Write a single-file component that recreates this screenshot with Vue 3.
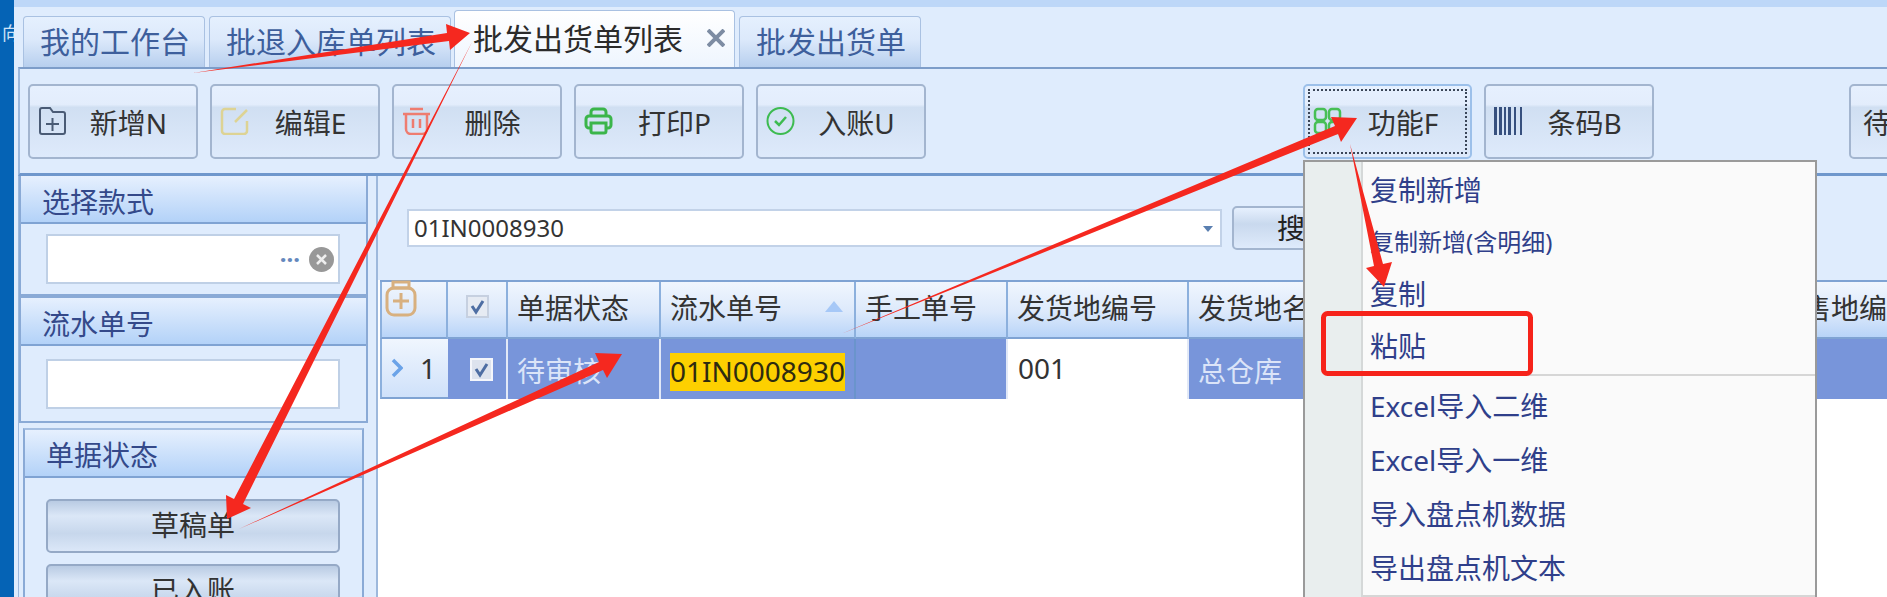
<template>
  <div class="app">
    <div class="strip"><span class="strip-text">向</span></div>

    <div class="main">
      <div class="tabs">
        <div v-for="tab in tabs" :key="tab.name" class="tab" :class="{ active: tab.active }" :style="{ width: tab.width + 'px' }">
          {{ tab.name }}
          <svg v-if="tab.active" class="tab-close" width="18" height="18" viewBox="0 0 18 18">
            <path d="M1 1l16 16M17 1L1 17" stroke="#7d8ca3" stroke-width="4" fill="none" />
          </svg>
        </div>
      </div>

      <div class="toolbar">
        <button v-for="btn in buttons" :key="btn.text" class="tool-btn" :class="btn.cls">
          <svg v-if="btn.icon === 'add'" class="tool-icon" viewBox="0 0 29 28" fill="none" stroke="#4a5b75" stroke-width="2">
            <path d="M9 27H4a2 2 0 0 1-2-2V3a2 2 0 0 1 2-2h8l3 4h10a2 2 0 0 1 2 2v16M27 23v2a2 2 0 0 1-2 2H9" />
            <path d="M8 17h13M14.500 11v13" />
          </svg>
          <svg v-else-if="btn.icon === 'edit'" class="tool-icon" viewBox="0 0 29 28" fill="none" stroke="#ddd394" stroke-width="2.500">
            <path d="M16 2H5a3 3 0 0 0-3 3v19a3 3 0 0 0 3 3h19a3 3 0 0 0 3-3V14" />
            <path d="M15 15L27 3" />
          </svg>
          <svg v-else-if="btn.icon === 'del'" class="tool-icon" viewBox="0 0 29 28" fill="none" stroke="#ee7c70" stroke-width="2.500">
            <path d="M8 2h13M1 7h27M4 7v15a5 5 0 0 0 5 5h11a5 5 0 0 0 5-5V7M11 12v9M18 12v9" />
          </svg>
          <svg v-else-if="btn.icon === 'print'" class="tool-icon" viewBox="0 0 29 28" fill="none" stroke="#3bb54a" stroke-width="3">
            <path d="M7 9V5a3 3 0 0 1 3-3h9a3 3 0 0 1 3 3v4" />
            <path d="M6 21H5a3 3 0 0 1-3-3v-6a3 3 0 0 1 3-3h19a3 3 0 0 1 3 3v6a3 3 0 0 1-3 3h-1" />
            <path d="M7 16h15v8a2 2 0 0 1-2 2H9a2 2 0 0 1-2-2z" />
          </svg>
          <svg v-else-if="btn.icon === 'check'" class="tool-icon" viewBox="0 0 29 28" fill="none" stroke="#3dbb50" stroke-width="2">
            <circle cx="14.500" cy="14" r="13" />
            <path d="M9 14l4 4 7-8" stroke-width="2.500" />
          </svg>
          <svg v-else-if="btn.icon === 'func'" class="tool-icon" viewBox="0 0 29 28" fill="none" stroke="#47bf55" stroke-width="2.500">
            <rect x="2" y="2" width="11" height="11" rx="3" />
            <rect x="16" y="2" width="11" height="11" rx="3" />
            <rect x="2" y="15" width="11" height="11" rx="3" />
            <rect x="16" y="15" width="11" height="11" rx="3" />
          </svg>
          <svg v-else-if="btn.icon === 'code'" class="tool-icon" viewBox="0 0 29 28" fill="#37507e">
            <rect x="0" y="0" width="3" height="28" />
            <rect x="5" y="0" width="3" height="28" />
            <rect x="10" y="0" width="2" height="28" />
            <rect x="14" y="0" width="3" height="28" />
            <rect x="20" y="0" width="2" height="28" />
            <rect x="26" y="0" width="2" height="28" />
          </svg>
          <span class="tool-label">{{ btn.text }}</span>
        </button>
      </div>

      <div class="body">
        <div class="side">
          <div class="pane pane-one">
            <div class="pane-title">选择款式</div>
            <div class="pane-body">
              <div class="side-input">
                <span class="dots">···</span>
                <svg class="clear" width="25" height="25" viewBox="0 0 25 25">
                  <circle cx="12.500" cy="12.500" r="12.500" fill="#989898" />
                  <path d="M8 8l9 9M17 8l-9 9" stroke="#eee" stroke-width="2.500" />
                </svg>
              </div>
            </div>
          </div>
          <div class="pane pane-two">
            <div class="pane-title">流水单号</div>
            <div class="pane-body">
              <div class="side-input"></div>
            </div>
          </div>
          <div class="pane pane-three">
            <div class="pane-title">单据状态</div>
            <div class="pane-body status-body">
              <div class="status-btn">草稿单</div>
              <div class="status-btn">已入账</div>
            </div>
          </div>
        </div>

        <div class="content">
          <div class="search-row">
            <div class="combo">
              01IN0008930
              <span class="combo-arrow"></span>
            </div>
            <div class="search-btn">搜索</div>
          </div>

          <div class="table">
            <div class="th th-plus">
              <svg class="plus-icon" width="32" height="38" viewBox="0 0 32 38" fill="none" stroke="#d8b07f" stroke-width="3">
                <path d="M8 2h16v6H8z" />
                <rect x="2" y="8" width="28" height="27" rx="7" />
                <path d="M8 21h16M16 13v16" />
              </svg>
            </div>
            <div class="th th-check">
              <svg class="check" width="23" height="23" viewBox="0 0 23 23">
                <rect x="1" y="1" width="21" height="21" fill="#e6ebf3" stroke="#c6d0e0" stroke-width="2" />
                <path d="M6 11l4 6 7-11" fill="none" stroke="#4e6ea3" stroke-width="3" />
              </svg>
            </div>
            <div v-for="col in columns" :key="col.title" class="th">
              {{ col.title }}
              <span v-if="col.sorted" class="sort-arrow"></span>
            </div>

            <div class="td td-num">
              <svg width="12" height="20" viewBox="0 0 12 20" fill="none" stroke="#6ba3e8" stroke-width="3.500">
                <path d="M2 2l8 8-8 8" />
              </svg>
              <span>1</span>
            </div>
            <div class="td td-check">
              <svg class="check" width="23" height="23" viewBox="0 0 23 23">
                <rect x="1" y="1" width="21" height="21" fill="#dde3ee" stroke="#f4f6fb" stroke-width="2" />
                <path d="M6 11l4 6 7-11" fill="none" stroke="#4e6ea3" stroke-width="3" />
              </svg>
            </div>
            <div v-for="col in columns" :key="col.title" class="td" :class="col.cls">
              <span :class="{ mark: col.mark }">{{ col.value }}</span>
            </div>
          </div>
        </div>
      </div>
    </div>

    <div class="menu">
      <template v-for="item in menuItems" :key="item.text">
        <div class="menu-item" :class="item.cls">{{ item.text }}</div>
      </template>
    </div>

    <svg class="marks" width="1887" height="597" viewBox="0 0 1887 597">
      <polygon v-for="arrow in arrows" :key="arrow" :points="arrow" fill="#f5281f" />
      <rect x="1323.500" y="313.500" width="207" height="60" rx="4" fill="none" stroke="#f6231a" stroke-width="5" />
    </svg>
  </div>
</template>

<script setup>
const tabs = [
  { name: '我的工作台', width: 182 },
  { name: '批退入库单列表', width: 242 },
  { name: '批发出货单列表', width: 281, active: true },
  { name: '批发出货单', width: 182 },
]

const buttons = [
  { text: '新增N', icon: 'add' },
  { text: '编辑E', icon: 'edit' },
  { text: '删除', icon: 'del' },
  { text: '打印P', icon: 'print' },
  { text: '入账U', icon: 'check' },
  { text: '功能F', icon: 'func', cls: 'btn-func' },
  { text: '条码B', icon: 'code' },
  { text: '待审核', cls: 'btn-wait' },
]

const columns = [
  { title: '单据状态', value: '待审核', cls: 'light' },
  { title: '流水单号', value: '01IN0008930', sorted: true, mark: true, cls: 'edge' },
  { title: '手工单号', value: '' },
  { title: '发货地编号', value: '001', cls: 'plain' },
  { title: '发货地名称', value: '总仓库', cls: 'light' },
  { title: '收货地名称', value: '' },
  { title: '销售地编号', value: '' },
]

const menuItems = [
  { text: '复制新增' },
  { text: '复制新增(含明细)', cls: 'small' },
  { text: '复制' },
  { text: '粘贴', cls: 'sep' },
  { text: 'Excel导入二维', cls: 'tall' },
  { text: 'Excel导入一维', cls: 'tall' },
  { text: '导入盘点机数据', cls: 'tall' },
  { text: '导出盘点机文本', cls: 'tall sep-end' },
]

const arrows = [
  '193,73 447,33 446,24 470,33 450,50 449,41',
  '472,42 234,499 226,495 227,519 251,508 243,504',
  '239,529 599,362 595,353 622,354 607,378 603,370',
  '841,334 1335,126 1331,117 1357,118 1341,142 1338,134',
  '1350,144 1374,266 1366,268 1384,287 1392,262 1383,264',
]
</script>

<style scoped>
.app {
  position: relative;
  display: flex;
  width: 1887px;
  height: 597px;
  overflow: hidden;
  background: #dfecfd;
  font-family: "Noto Sans", "Noto Sans CJK SC", sans-serif;
  font-size: 28px;
  color: #333;
}

.strip {
  flex: none;
  width: 14px;
  background: #0563b5;
  overflow: hidden;
}

.strip-text {
  display: block;
  margin: 23px 0 0 2px;
  font-size: 18px;
  line-height: 20px;
  color: #cfe2f6;
  white-space: nowrap;
}

.main {
  flex: 1;
  min-width: 0;
  display: flex;
  flex-direction: column;
  border-top: 7px solid #bdd7f8;
}

.tabs {
  display: flex;
  align-items: flex-end;
  gap: 4px;
  height: 60px;
  padding-left: 9px;
}

.tab {
  position: relative;
  flex: none;
  box-sizing: border-box;
  height: 51px;
  padding: 0 0 0 16px;
  border: 1px solid #a9c1e2;
  border-bottom: none;
  border-radius: 4px 4px 0 0;
  background: linear-gradient(to bottom, #e5f0fe, #dce9fb 45%, #b7cfee);
  font-size: 30px;
  line-height: 49px;
  color: #3e5f9c;
  white-space: nowrap;
}

.tab.active {
  height: 57px;
  margin-left: -1px;
  padding-left: 18px;
  background: linear-gradient(to bottom, #fff, #eef5fe);
  line-height: 55px;
  color: #2b2b2b;
}

.tab-close {
  position: absolute;
  left: 252px;
  top: 18px;
}

.toolbar {
  flex: none;
  display: flex;
  gap: 12px;
  box-sizing: border-box;
  height: 109px;
  margin-left: 4px;
  padding: 15px 0 0 8px;
  border-top: 2px solid #7d9dc9;
  border-bottom: 3px solid #6f97cc;
  border-left: 2px solid #9db8dc;
}

.tool-btn {
  position: relative;
  flex: none;
  display: flex;
  align-items: center;
  box-sizing: border-box;
  width: 170px;
  height: 75px;
  padding: 0 10px 0 8px;
  border: 2px solid #a3b5cf;
  border-radius: 5px;
  background: linear-gradient(to bottom, #e6f0fe, #e3edfc 26%, #d0dff2 30%, #deeafb);
  font: inherit;
  color: #333;
}

.tool-icon {
  flex: none;
  width: 29px;
  height: 28px;
  margin-top: -2px;
}

.tool-label {
  flex: 1;
  padding-left: 4px;
  text-align: center;
}

.btn-func {
  width: 169px;
  margin-left: 365px;
  border-color: #9cc0ea;
}

.btn-func::before {
  content: "";
  position: absolute;
  inset: 3px;
  border: 2px dotted #3b4658;
}

.btn-wait {
  margin-left: 183px;
  padding-left: 12px;
}

.btn-wait .tool-label {
  flex: none;
  padding-left: 0;
  text-align: left;
  white-space: nowrap;
}

.body {
  flex: 1;
  min-height: 0;
  display: flex;
  margin-left: 4px;
}

.side {
  flex: none;
  width: 350px;
  box-sizing: border-box;
  border-left: 1px solid #9db8dc;
}

.pane {
  box-sizing: border-box;
  border: 2px solid #8aaad6;
  border-top: none;
}

.pane-one {
  height: 120px;
}

.pane-two {
  height: 127px;
  border-top: 2px solid #8aaad6;
}

.pane-three {
  margin: 5px 4px 0;
  border-top: 2px solid #a5bfe2;
  border-bottom: none;
}

.pane-title {
  box-sizing: border-box;
  height: 48px;
  padding-left: 21px;
  border-bottom: 2px solid #7fa3d3;
  background: linear-gradient(to bottom, #e6f0fe, #b3d2f8);
  line-height: 53px;
  color: #34498a;
}

.pane-three .pane-title {
  line-height: 50px;
}

.pane-body {
  padding: 10px 0 0 25px;
}

.pane-two .pane-body {
  padding-top: 13px;
}

.side-input {
  display: flex;
  align-items: center;
  justify-content: flex-end;
  box-sizing: border-box;
  width: 294px;
  height: 50px;
  padding-right: 4px;
  border: 2px solid #bfd0e6;
  background: #fff;
}

.dots {
  margin-right: 9px;
  font-size: 24px;
  font-weight: 700;
  line-height: 1;
  color: #6488bd;
}

.status-body {
  padding: 21px 0 0 21px;
}

.status-btn {
  box-sizing: border-box;
  width: 294px;
  height: 54px;
  margin-bottom: 11px;
  border: 2px solid #95a9c6;
  border-radius: 5px;
  background: linear-gradient(to bottom, #b9cbe3, #dbe7f7 30%, #c7d7ec 65%, #dbe7f8);
  line-height: 48px;
  text-align: center;
  color: #333;
}

.content {
  flex: 1;
  min-width: 0;
  display: flex;
  flex-direction: column;
  margin-left: 8px;
  border-left: 2px solid #9db8dc;
  background: linear-gradient(to bottom, #dfecfd 104px, #fff 104px);
}

.search-row {
  flex: none;
  display: flex;
  align-items: center;
  gap: 10px;
  height: 104px;
  padding: 0 0 0 29px;
}

.combo {
  position: relative;
  box-sizing: border-box;
  width: 815px;
  height: 38px;
  padding-left: 5px;
  border: 2px solid #c2d2e8;
  background: #fff;
  font-size: 24px;
  line-height: 34px;
  color: #333;
}

.combo-arrow {
  position: absolute;
  right: 7px;
  top: 15px;
  border-left: 5px solid transparent;
  border-right: 5px solid transparent;
  border-top: 6px solid #5a7fb0;
}

.search-btn {
  flex: none;
  box-sizing: border-box;
  width: 170px;
  height: 44px;
  padding-left: 43px;
  border: 2px solid #a3b5cf;
  border-radius: 5px;
  background: linear-gradient(to bottom, #e6f0fe, #c9d9ee 40%, #deeafb);
  line-height: 40px;
  color: #222;
}

.table {
  display: grid;
  grid-template-columns: 68px 60px 153px 195px 152px 181px 180px 397px 300px;
  grid-template-rows: 57px 60px;
  margin-left: 2px;
  border-top: 2px solid #7fa3d3;
  width: max-content;
}

.th {
  position: relative;
  box-sizing: border-box;
  padding-left: 9px;
  border-right: 2px solid #8cb0dd;
  border-bottom: 2px solid #7fa3d3;
  background: linear-gradient(to bottom, #f0f6fe, #dce9fb 55%, #b8d4f8);
  line-height: 52px;
  color: #333;
  white-space: nowrap;
}

.th-plus {
  padding: 0 0 0 3px;
  border-left: 2px solid #8cb0dd;
  line-height: 0;
}

.plus-icon {
  margin-top: -2px;
}

.th-check,
.td-check {
  display: flex;
  align-items: center;
  justify-content: center;
  padding: 0;
}

.th-check {
  padding-bottom: 6px;
}

.sort-arrow {
  position: absolute;
  right: 11px;
  top: 19px;
  border-left: 9px solid transparent;
  border-right: 9px solid transparent;
  border-bottom: 11px solid #a6c8f7;
}

.td {
  box-sizing: border-box;
  padding-left: 9px;
  border-right: 2px solid #e2e9f7;
  background: #7895da;
  line-height: 58px;
  white-space: nowrap;
}

.td.edge {
  border-right-color: #6a94cc;
}

.td-num {
  display: flex;
  align-items: center;
  justify-content: space-between;
  padding: 0 12px 0 9px;
  border-left: 2px solid #8cb0dd;
  border-right: none;
  border-bottom: 2px solid #7fa3d3;
  background: linear-gradient(to bottom, #f0f6fe, #cfe1fa);
}

.td.plain {
  padding-left: 10px;
  background: #fff;
}

.td.light {
  line-height: 64px;
  color: #dbe4f8;
}

.mark {
  display: inline-block;
  height: 38px;
  background: #fdd000;
  line-height: 36px;
  vertical-align: middle;
  color: #2e2b10;
}

.menu {
  position: absolute;
  left: 1303px;
  top: 160px;
  box-sizing: border-box;
  width: 514px;
  height: 440px;
  padding-top: 2px;
  border: 2px solid #9a9a9a;
  border-bottom: none;
  background: linear-gradient(to right, #e9eeee 56px, #d5d8d8 56px, #d5d8d8 58px, #fafafa 58px);
}

.menu-item {
  box-sizing: border-box;
  height: 52px;
  padding-left: 65px;
  line-height: 52px;
  color: #2f3f8a;
}

.menu-item.small {
  font-size: 24px;
}

.menu-item.sep {
  height: 56px;
  padding-bottom: 4px;
  margin-bottom: 3px;
  background: linear-gradient(#d6d6d6, #d6d6d6) 58px 100% / 452px 2px no-repeat;
}

.menu-item.tall {
  height: 54px;
  line-height: 54px;
}

.menu-item.sep-end {
  height: 56px;
  background: linear-gradient(#d6d6d6, #d6d6d6) 58px 100% / 452px 2px no-repeat;
}

.marks {
  position: absolute;
  left: 0;
  top: 0;
  pointer-events: none;
}
</style>
